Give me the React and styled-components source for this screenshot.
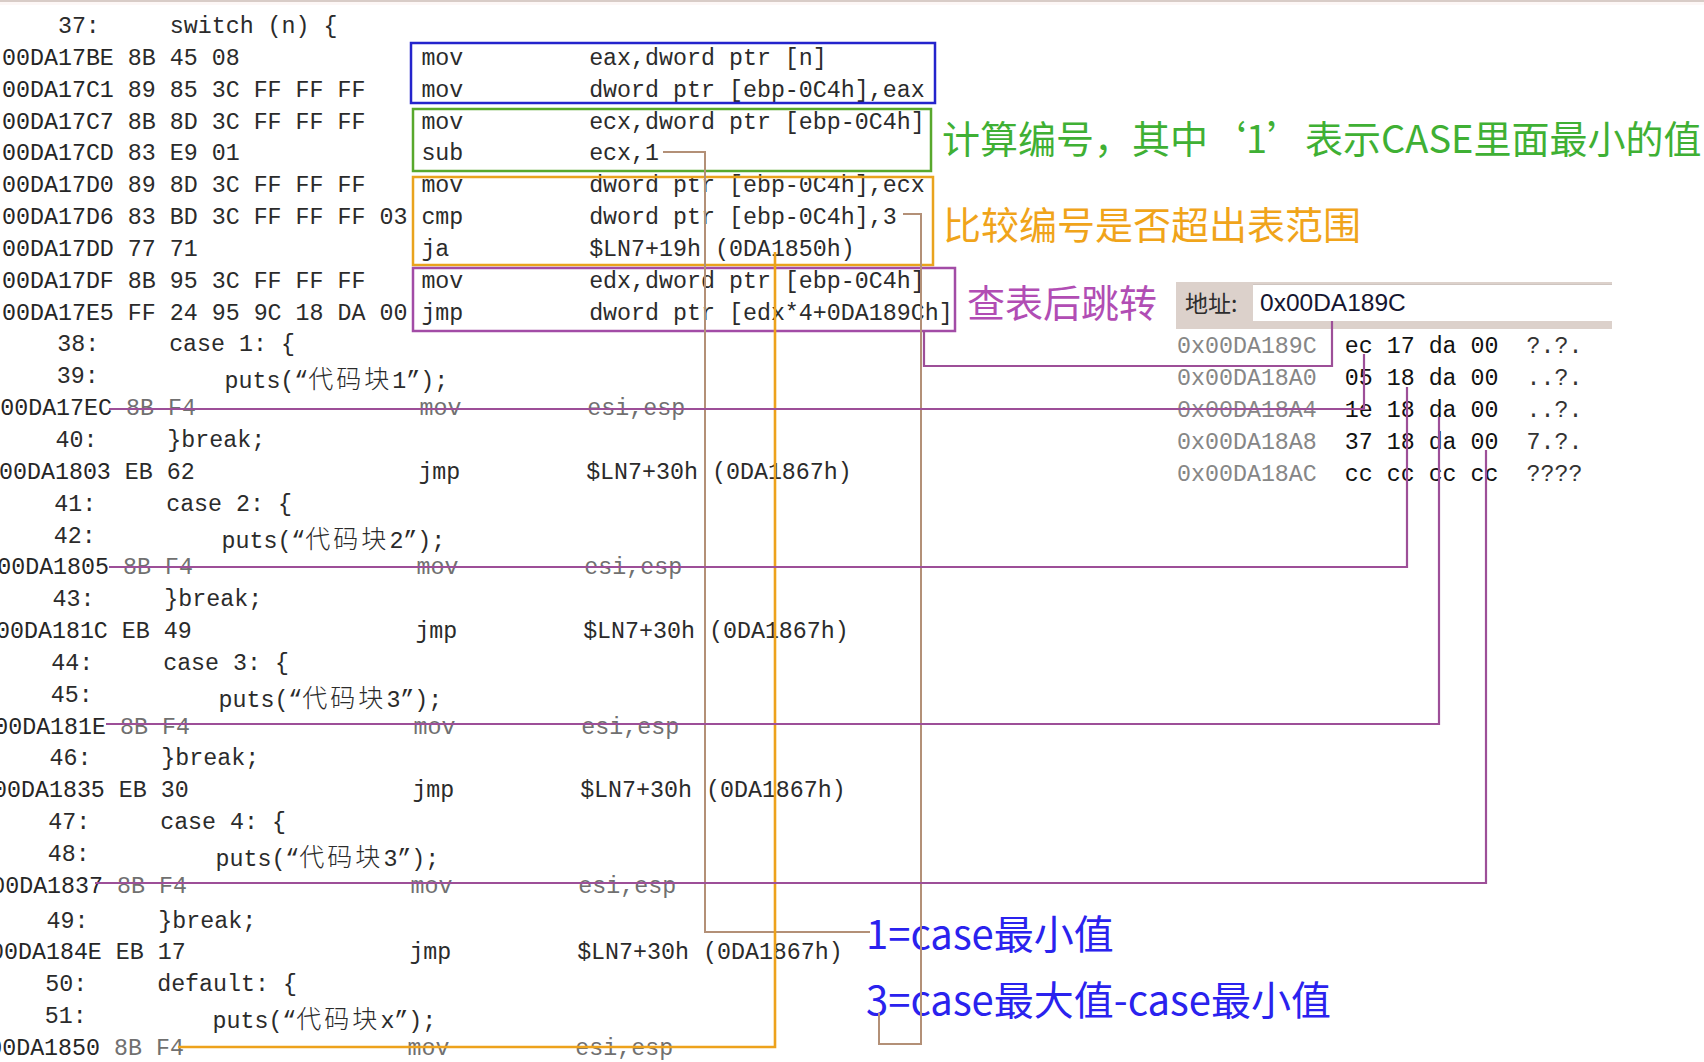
import React from "react";
import styled, { createGlobalStyle } from "styled-components";

const ROW_H = 31.85;

const GlobalStyle = createGlobalStyle`
    html, body {
        margin: 0;
        padding: 0;
        background: #fff;
        overflow: hidden;
    }
`;

const Page = styled.div`
    position: relative;
    width: 1704px;
    height: 1062px;
    overflow: hidden;
    background: linear-gradient(#d8ccc7 0 2px, #fdf7f6 2px 5px, #fff 5px);
    font-family: "Liberation Mono", "Noto Sans CJK SC", monospace;
    font-size: 23.3px;
    color: #2b2b2b;
`;

const Listing = styled.div`
    display: flex;
    flex-direction: column;
    padding-top: 12px;
`;

const Row = styled.div`
    display: grid;
    height: ${ROW_H}px;
    line-height: ${ROW_H}px;
    white-space: pre;
    margin-left: ${(p) => 2 + p.$shift}px;
    margin-top: ${(p) => p.$gap || 0}px;
`;

const AsmRow = styled(Row)`
    grid-template-columns: 9ch 21ch 12ch auto;
`;

const SourceRow = styled(Row)`
    grid-template-columns: 12ch auto;
`;

const Addr = styled.span`
    color: #262626;
`;

const Dimmable = styled.span`
    color: ${(p) => (p.$dim ? "#707070" : "#2b2b2b")};
`;

const LineNo = styled.span`
    padding-left: 4ch;
`;

const SourceText = styled.span`
    padding-left: ${(p) => p.$indent}ch;
`;

const Han = styled.span`
    font-family: "Noto Sans CJK SC", sans-serif;
    font-weight: 300;
    font-size: 25px;
    letter-spacing: 3px;
`;

const Note = styled.div`
    position: absolute;
    top: ${(p) => p.$top}px;
    left: ${(p) => p.$left}px;
    font-family: "Noto Sans CJK SC", sans-serif;
    font-size: 38px;
    line-height: 1;
    color: ${(p) => p.$color};
    white-space: nowrap;
`;

const NoteStack = styled.div`
    position: absolute;
    top: 912px;
    left: 866px;
    display: flex;
    flex-direction: column;
    gap: 26px;
    font-family: "Noto Sans CJK SC", sans-serif;
    font-size: 40px;
    line-height: 1;
    color: #2a22ee;
    white-space: nowrap;
`;

const MemoryWindow = styled.div`
    position: absolute;
    left: 1176px;
    top: 282px;
    width: 436px;
`;

const AddressBar = styled.div`
    display: flex;
    align-items: flex-start;
    height: 47px;
    box-sizing: border-box;
    padding-top: 2px;
    background: #dcd1cb;
`;

const AddressLabel = styled.span`
    width: 77px;
    box-sizing: border-box;
    padding-left: 9px;
    font-family: "Noto Sans CJK SC", sans-serif;
    font-size: 23px;
    line-height: 37px;
    color: #2d2d2d;
`;

const AddressInput = styled.div`
    flex: 1;
    height: 37px;
    box-sizing: border-box;
    padding-left: 7px;
    background: #fff;
    border-top: 1px solid #cfc5c0;
    font-family: "Liberation Sans", sans-serif;
    font-size: 24.5px;
    line-height: 36px;
    color: #151530;
`;

const DumpList = styled.div`
    padding-top: 2px;
`;

const DumpRow = styled.div`
    display: grid;
    grid-template-columns: 12ch 13ch auto;
    height: 32px;
    line-height: 32px;
    margin-left: 1px;
    white-space: pre;
`;

const DumpAddr = styled.span`
    color: #868686;
`;

const DumpBytes = styled.span`
    color: #111;
`;

const DumpAscii = styled.span`
    color: #333;
`;

const Overlay = styled.svg`
    position: absolute;
    top: 0;
    left: 0;
    pointer-events: none;
`;

const asm = (addr, bytes, op, args, dim) => ({ kind: "asm", addr, bytes, op, args, dim });
const src = (no, text, indent = 0) => ({ kind: "src", no, text, indent });

const lines = [
    src("37:", "switch (n) {"),
    asm("00DA17BE", "8B 45 08", "mov", "eax,dword ptr [n]"),
    asm("00DA17C1", "89 85 3C FF FF FF", "mov", "dword ptr [ebp-0C4h],eax"),
    asm("00DA17C7", "8B 8D 3C FF FF FF", "mov", "ecx,dword ptr [ebp-0C4h]"),
    asm("00DA17CD", "83 E9 01", "sub", "ecx,1"),
    asm("00DA17D0", "89 8D 3C FF FF FF", "mov", "dword ptr [ebp-0C4h],ecx"),
    asm("00DA17D6", "83 BD 3C FF FF FF 03", "cmp", "dword ptr [ebp-0C4h],3"),
    asm("00DA17DD", "77 71", "ja", "$LN7+19h (0DA1850h)"),
    asm("00DA17DF", "8B 95 3C FF FF FF", "mov", "edx,dword ptr [ebp-0C4h]"),
    asm("00DA17E5", "FF 24 95 9C 18 DA 00", "jmp", "dword ptr [edx*4+0DA189Ch]"),
    src("38:", "case 1: {"),
    src("39:", "puts(“代码块1”);", 4),
    asm("00DA17EC", "8B F4", "mov", "esi,esp", true),
    src("40:", "}break;"),
    asm("00DA1803", "EB 62", "jmp", "$LN7+30h (0DA1867h)"),
    src("41:", "case 2: {"),
    src("42:", "puts(“代码块2”);", 4),
    asm("00DA1805", "8B F4", "mov", "esi,esp", true),
    src("43:", "}break;"),
    asm("00DA181C", "EB 49", "jmp", "$LN7+30h (0DA1867h)"),
    src("44:", "case 3: {"),
    src("45:", "puts(“代码块3”);", 4),
    asm("00DA181E", "8B F4", "mov", "esi,esp", true),
    src("46:", "}break;"),
    asm("00DA1835", "EB 30", "jmp", "$LN7+30h (0DA1867h)"),
    src("47:", "case 4: {"),
    src("48:", "puts(“代码块3”);", 4),
    asm("00DA1837", "8B F4", "mov", "esi,esp", true),
    { ...src("49:", "}break;"), gap: 3 },
    asm("00DA184E", "EB 17", "jmp", "$LN7+30h (0DA1867h)"),
    src("50:", "default: {"),
    src("51:", "puts(“代码块x”);", 4),
    asm("00DA1850", "8B F4", "mov", "esi,esp", true),
];

const dump = [
    ["0x00DA189C", "ec 17 da 00", "?.?."],
    ["0x00DA18A0", "05 18 da 00", "..?."],
    ["0x00DA18A4", "1e 18 da 00", "..?."],
    ["0x00DA18A8", "37 18 da 00", "7.?."],
    ["0x00DA18AC", "cc cc cc cc", "????"],
];

// split CJK runs so they get the double-width cell of the original font
function renderSource(text) {
    return text.split(/([\u4e00-\u9fff]+)/).map((part, i) =>
        /[\u4e00-\u9fff]/.test(part) ? <Han key={i}>{part}</Han> : part
    );
}

function CodeListing() {
    return (
        <Listing>
            {lines.map((l, i) => {
                // the screenshot is slightly skewed: lower rows drift left
                const shift = i > 9 ? -(i - 9) * 0.6 : 0;
                if (l.kind === "asm") {
                    return (
                        <AsmRow key={i} $shift={shift} $gap={l.gap}>
                            <Addr>{l.addr}</Addr>
                            <Dimmable $dim={l.dim}>{l.bytes}</Dimmable>
                            <Dimmable $dim={l.dim}>{l.op}</Dimmable>
                            <Dimmable $dim={l.dim}>{l.args}</Dimmable>
                        </AsmRow>
                    );
                }
                return (
                    <SourceRow key={i} $shift={shift} $gap={l.gap}>
                        <LineNo>{l.no}</LineNo>
                        <SourceText $indent={l.indent}>{renderSource(l.text)}</SourceText>
                    </SourceRow>
                );
            })}
        </Listing>
    );
}

function Memory() {
    return (
        <MemoryWindow>
            <AddressBar>
                <AddressLabel>地址:</AddressLabel>
                <AddressInput>0x00DA189C</AddressInput>
            </AddressBar>
            <DumpList>
                {dump.map(([a, b, c]) => (
                    <DumpRow key={a}>
                        <DumpAddr>{a}</DumpAddr>
                        <DumpBytes>{b}</DumpBytes>
                        <DumpAscii>{c}</DumpAscii>
                    </DumpRow>
                ))}
            </DumpList>
        </MemoryWindow>
    );
}

const frames = [
    { x: 411, y: 43, w: 524, h: 60, c: "#2424cc" },
    { x: 413, y: 109, w: 518, h: 62, c: "#58a82c" },
    { x: 413, y: 177, w: 520, h: 88, c: "#e9a31d" },
    { x: 413, y: 268, w: 542, h: 63, c: "#a24ca6" },
];

const links = [
    { d: "M663 152 H705 V932 H870", c: "#b39077", w: 2 },
    { d: "M903 214 H921 V1044 H879 V1013", c: "#b39077", w: 2 },
    { d: "M775 252 V1047 H178", c: "#eda21c", w: 2.6 },
    { d: "M1332 321 V366 H924 V331", c: "#9d4f98", w: 2.2 },
    { d: "M1364 354 V409 H109", c: "#9d4f98", w: 2.2 },
    { d: "M1407 387 V567 H109", c: "#9d4f98", w: 2.2 },
    { d: "M1439 417 V724 H106", c: "#9d4f98", w: 2.2 },
    { d: "M1486 450 V883 H95", c: "#9d4f98", w: 2.2 },
];

function Annotations() {
    return (
        <Overlay width="1704" height="1062" viewBox="0 0 1704 1062">
            {frames.map((f, i) => (
                <rect key={i} x={f.x} y={f.y} width={f.w} height={f.h} fill="none" stroke={f.c} strokeWidth="2.5" />
            ))}
            {links.map((l, i) => (
                <path key={i} d={l.d} fill="none" stroke={l.c} strokeWidth={l.w} />
            ))}
        </Overlay>
    );
}

export default function App() {
    return (
        <>
            <GlobalStyle />
            <Page>
                <CodeListing />
                <Memory />
                <Note $top={118} $left={942} $color="#3fb034">计算编号，其中‘1’表示CASE里面最小的值</Note>
                <Note $top={204} $left={943} $color="#f0a41a">比较编号是否超出表范围</Note>
                <Note $top={282} $left={967} $color="#b14db4">查表后跳转</Note>
                <NoteStack>
                    <span>1=case最小值</span>
                    <span>3=case最大值-case最小值</span>
                </NoteStack>
                <Annotations />
            </Page>
        </>
    );
}
